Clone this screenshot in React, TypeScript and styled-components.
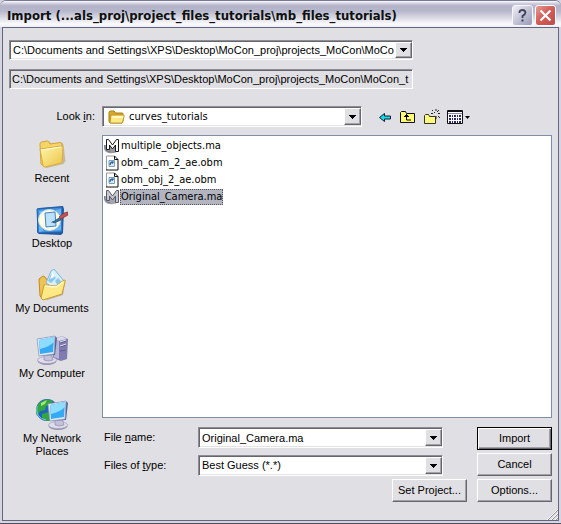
import React from "react";
import styled, { createGlobalStyle, css } from "styled-components";

const GlobalStyle = createGlobalStyle`
  * { box-sizing: border-box; }
  html, body { margin: 0; padding: 0; }
  body { background: #e0dfe3; color: #000; font: 11px/15px "Liberation Sans", Arial, sans-serif; }
  button, input, select { font: inherit; color: inherit; }
`;

const sunken = css`
  border: 1px solid;
  border-color: #8d8d95 #fff #fff #8d8d95;
  box-shadow: inset 1px 1px 0 #66666c, inset -1px -1px 0 #e4e2e6;
`;
const raised = css`
  border: 1px solid;
  border-color: #fff #66666c #66666c #fff;
  box-shadow: inset -1px -1px 0 #a2a1a8;
`;

const Window = styled.div`
  display: flex;
  flex-direction: column;
  min-height: 100vh;
  padding: 0 2px 2px;
  background: #d5d4e0;
  border-bottom: 1px solid #50505e;
`;

const TitleBar = styled.header`
  display: flex;
  align-items: center;
  gap: 2px;
  height: 27px;
  margin: 0 -2px;
  padding: 3px 5px 0 7px;
  border-top: 1px solid #777995;
  border-radius: 6px 6px 0 0;
  background: linear-gradient(#fff 0, #d5d5e2 2px, #b2b2c9 5px, #b7b7cc 10px, #e0e0e9 18px, #fafafd 23px, #ececf2 26px);
`;

const Title = styled.h1`
  flex: 1;
  margin: 0;
  overflow: hidden;
  white-space: nowrap;
  font: bold 13px/18px "DejaVu Sans Condensed", "DejaVu Sans", sans-serif;
  color: #0e1010;
`;

const CaptionButton = styled.button<{ $danger?: boolean }>`
  width: 21px;
  height: 21px;
  padding: 0;
  border: 1px solid ${(p) => (p.$danger ? "#fff" : "#f5f5fb")};
  border-radius: 3px;
  background: ${(p) =>
    p.$danger
      ? "linear-gradient(135deg, #e59d96, #d45e58 45%, #c04a48)"
      : "linear-gradient(135deg, #f0f0f7, #c3c3d6 50%, #9899b4)"};
  svg { display: block; margin: 0 auto; }
`;

const Body = styled.main`
  flex: 1;
  display: flex;
  flex-direction: column;
  padding: 12px 6px 18px;
  background: #e0dfe3;
  border: 1px solid #626680;
`;

const Paths = styled.div`
  display: flex;
  flex-direction: column;
  gap: 9px;
  margin-right: 139px;
`;

const Combo = styled.div<{ $height?: number }>`
  ${sunken}
  display: flex;
  align-items: center;
  flex: 1 1 auto;
  min-width: 0;
  height: ${(p) => p.$height ?? 21}px;
  padding: 1px 0 1px 2px;
  background: #fff;
`;

const fieldText = css`
  flex: 1;
  min-width: 0;
  width: 100%;
  height: 100%;
  padding: 0 1px;
  border: 0;
  outline: 0;
  background: transparent;
`;
const TextInput = styled.input`${fieldText}`;
const Select = styled.select<{ $list?: boolean }>`
  ${fieldText}
  appearance: none;
  ${(p) => p.$list && css`font-family: "DejaVu Sans Condensed", "DejaVu Sans", sans-serif;`}
`;

const ReadOnlyPath = styled.input`
  ${sunken}
  width: 100%;
  height: 20px;
  padding: 0 2px;
  outline: 0;
  background: #e0dfe3;
`;

const arrowFace = css`
  ${raised}
  display: flex;
  flex: none;
  align-items: center;
  justify-content: center;
  width: 17px;
  height: 100%;
  padding: 0;
  background: #e0dfe3;
`;
const ArrowButton = styled.button`${arrowFace}`;
const ArrowFace = styled.span`${arrowFace} pointer-events: none;`;

const Explorer = styled.div`
  flex: 1;
  display: grid;
  grid-template-columns: 86px 1fr;
  column-gap: 7px;
  margin-top: 17px;
`;

const Places = styled.nav`
  display: flex;
  flex-direction: column;
  padding-top: 33px;
`;
const Place = styled.a`
  display: flex;
  flex-direction: column;
  align-items: center;
  height: 65px;
  color: #000;
  text-align: center;
  text-decoration: none;
  line-height: 13px;
  svg { flex: none; margin-bottom: 1px; }
`;

const Browser = styled.section`
  display: flex;
  flex-direction: column;
  min-width: 0;
`;

const LookIn = styled.div`
  display: flex;
  align-items: center;
  margin-left: -93px;
`;
const LookLabel = styled.label`
  width: 93px;
  padding-right: 7px;
  text-align: right;
`;
const FolderSlot = styled.span`
  display: flex;
  margin: 0 3px;
`;
const Tools = styled.div`
  display: flex;
  align-items: center;
  width: 190px;
  padding-left: 15px;
  gap: 6px;
`;
const ToolButton = styled.button`
  display: flex;
  padding: 0;
  border: 0;
  background: none;
`;

const FileList = styled.ul`
  flex: 1;
  min-height: 120px;
  margin: 8px 0 9px;
  padding: 1px;
  border: 1px solid #7f8ea8;
  background: #fff;
  list-style: none;
  font: 11px/17px "DejaVu Sans Condensed", "DejaVu Sans", sans-serif;
`;
const FileRow = styled.li`
  display: flex;
  align-items: center;
  height: 17px;
`;
const FileName = styled.span<{ $selected?: boolean }>`
  height: 16px;
  line-height: 14px;
  border: 1px ${(p) => (p.$selected ? "dotted #55555f" : "solid transparent")};
  background: ${(p) => (p.$selected ? "#b2b4bf" : "transparent")};
`;

const Footer = styled.div`
  display: flex;
  gap: 34px;
`;
const Fields = styled.div`
  display: flex;
  flex: 1;
  flex-direction: column;
  gap: 7px;
  min-width: 0;
`;
const Field = styled.div`
  display: flex;
  align-items: center;
`;
const FieldLabel = styled.label`
  flex: none;
  width: 96px;
  padding-left: 2px;
`;
const Actions = styled.div`
  display: flex;
  flex: none;
  flex-direction: column;
  gap: 3px;
`;
const ActionRow = styled.div`
  display: flex;
  justify-content: flex-end;
  gap: 10px;
  margin-top: 3px;
`;
const PushButton = styled.button<{ $primary?: boolean }>`
  ${raised}
  width: 75px;
  height: 23px;
  padding: 0;
  background: #e0dfe3;
  ${(p) =>
    p.$primary &&
    css`
      border-color: #000;
      box-shadow: inset 1px 1px 0 #fff, inset -1px -1px 0 #66666c, inset -2px -2px 0 #a2a1a8;
    `}
`;

const Grip = styled.svg`
  align-self: flex-end;
  margin: 6px -6px -18px 0;
`;

const Arrow = () => (
  <svg width="7" height="4" viewBox="0 0 7 4" aria-hidden="true" shapeRendering="crispEdges">
    <path d="M0 0h7L3.500 4z" />
  </svg>
);

const SmallFolder = () => (
  <svg width="17" height="14" viewBox="0 0 17 14" aria-hidden="true">
    <path d="M1 3Q1 1 2.500 1H6l1.500 2H14q1 0 1 1v7l-1 2H2.500Q1 13 1 11z" fill="#d9a827" stroke="#ad7d17" />
    <path d="M3 5h12.500q1 0 .7 1L14.500 12q-.3 1-1 1H2z" fill="#ffe980" stroke="#b98b20" strokeWidth=".8" />
    <path d="M4 6h11l-.5 2H3.500z" fill="#fffac8" />
  </svg>
);

const MayaIcon = ({ dim }: { dim?: boolean }) => (
  <svg width="16" height="16" viewBox="0 0 16 16" aria-hidden="true">
    <path d="M0 7q-1 7 5 8 6 1 9-2V8z" fill={dim ? "#a5a6b0" : "#97989b"} />
    <path d="M.5 7q0 6 6 7" fill="none" stroke="#777981" />
    <path
      d="M2.500 11.500v-10h2l4 5.500 4-5.500h2v12h-3V7L8.500 11 5.500 7v4.500z"
      fill={dim ? "#c5c6cf" : "#fff"}
      stroke={dim ? "#595b66" : "#161718"}
    />
  </svg>
);

const DocIcon = () => (
  <svg width="16" height="16" viewBox="0 0 16 16" aria-hidden="true">
    <path d="M2.500 1h8L14 4.500V15H2.500z" fill="#fff" />
    <path d="M2.500 15V1h8" fill="none" stroke="#999" />
    <path d="M10.500 1v3.500H14V15H2" fill="none" stroke="#111" />
    <path d="M10.500 1L14 4.500" stroke="#111" />
    <path d="M5 5.500h5.500v6H5z" fill="#d6e9f4" stroke="#7ba0b8" />
    <path d="M6 10q0-3 3-3M8 8.500l1.500-2" fill="none" stroke="#246599" strokeWidth="1.300" />
  </svg>
);

const RecentIcon = () => (
  <svg width="32" height="32" viewBox="0 0 32 32" aria-hidden="true">
    <defs>
      <linearGradient id="fold" x1="0" y1="0" x2="1" y2="1">
        <stop stopColor="#fff7a9" /><stop offset="1" stopColor="#edc24a" />
      </linearGradient>
    </defs>
    <path d="M6 5q0-1 1-1l6-1q1 0 1.500 1l1 2 10-2q2 0 2 2l2 16-2 3-17 4-3-3z" fill="#9f8337" opacity=".4" />
    <path d="M4 5q0-1.500 1.500-2l6-1q1 0 1.500 1l1 2 10-1.500q2 0 2 2V21L9 28 5 25z" fill="#f4d565" stroke="#cfa33a" />
    <path d="M4 10l21-3q2 0 2 1.500l-1 14q0 1-1 1.500L9 28q-2 0-2-2z" fill="url(#fold)" stroke="#dcae3b" />
    <path d="M5 11l20-3" stroke="#fffce0" />
  </svg>
);

const DesktopIcon = () => (
  <svg width="32" height="32" viewBox="0 0 32 32" aria-hidden="true">
    <path d="M1 6q0-2 2-2l24-2 1 3-1 24-2 2-22-1-2-2z" fill="#23579c" />
    <path d="M1 5l25-2v25l-24 1z" fill="#3f8ddb" stroke="#1e65b4" />
    <path d="M3 7l7-1-6 8zM19 6l6-1v7zM3 21l5 6-5 1zM25 19v7l-7 1z" fill="#69b6f2" />
    <ellipse cx="13.500" cy="16" rx="11" ry="10.500" fill="#fffce6" stroke="#cfdfda" />
    <path d="M9 9l10-1 1 14-10 1z" fill="#bce2fb" stroke="#4284c0" />
    <path d="M17 18l6-4 2 2-7 3z" fill="#3673ad" stroke="#24476f" strokeWidth=".7" />
    <path d="M23 13l5-4 4-1v3l-7 4z" fill="#c25450" stroke="#832b35" strokeWidth=".7" />
    <path d="M15 19l2-2 1 1z" fill="#173b65" />
  </svg>
);

const DocumentsIcon = () => (
  <svg width="32" height="32" viewBox="0 0 32 32" aria-hidden="true">
    <path d="M4 11l4-3 4 4 12-3 5 4-2 13-16 5-7-3z" fill="#806b36" opacity=".4" />
    <path d="M3 10l4-3q2 0 3 3l17 2-2 12-17 6-4-3z" fill="#f0c452" stroke="#bd8b25" />
    <path d="M15 2l3-2 10 12-7 9-11-7z" fill="#d5effc" stroke="#80b5dc" />
    <path d="M15 5l-3 7 3 2 5-5zM19 12l3-3 3 3-3 5z" fill="#8ac7eb" />
    <path d="M17 2l-3 8 4-2z" fill="#fff" />
    <path d="M5 29l3-13 12 1 8-6q2 0 1 2l-3 12L7 31z" fill="#ffe985" stroke="#cd9b2c" />
    <path d="M9 17l11 1 7-5" fill="none" stroke="#fffbd0" strokeWidth="1.500" />
  </svg>
);

const Monitor = ({ x = 0, y = 0 }: { x?: number; y?: number }) => (
  <g transform={`translate(${x} ${y})`}>
    <ellipse cx="10" cy="25" rx="9.500" ry="4" fill="#9391af" />
    <ellipse cx="10" cy="24" rx="9.500" ry="3.500" fill="#dfdeed" stroke="#a3a0bd" strokeWidth=".7" />
    <path d="M7 17h7l2 7q-5 2-9 0z" fill="#c4c2da" stroke="#8d8bac" strokeWidth=".7" />
    <path d="M0 3l18-3 2 2-2 17-16 1z" fill="#54648f" />
    <path d="M0 3L18 0l-1 18-15 2z" fill="#e1e9f7" stroke="#93a0c6" strokeWidth=".7" />
    <path d="M2 4l15-3-1 15-13 2z" fill="#33aaf2" />
    <path d="M2 4l15-3v5q-5 5-14 7z" fill="#8edcff" />
  </g>
);

const ComputerIcon = () => (
  <svg width="32" height="32" viewBox="0 0 32 32" aria-hidden="true">
    <path d="M18 5l8-3 6 3-1 20-6 2-8-3z" fill="#7f7cb0" />
    <path d="M18 5l8-3 5 3-8 2z" fill="#d9d7ea" />
    <path d="M18 5l5 2v18l-5-2z" fill="#b7b5d6" />
    <path d="M24 9l6-2M24 13l6-2M24 17l6-1" stroke="#5f5c92" />
    <path d="M24 8l6-2M24 12l6-2" stroke="#ded9f0" />
    <Monitor x={1} y={2} />
  </svg>
);

const NetworkIcon = () => (
  <svg width="32" height="32" viewBox="0 0 32 32" aria-hidden="true">
    <circle cx="11" cy="11" r="11" fill="#2164bd" />
    <path d="M3 4q8-6 14-2l-3 4-4 1-1 4-5 1-3 5q-3-7 2-13zM6 15l7-2 6 5-5 4q-6 0-8-3z" fill="#33a641" />
    <path d="M5 4l6-3-2 4-4 2z" fill="#a5e875" />
    <path d="M1 7q-2 12 9 14" stroke="#74c8ef" fill="none" />
    <Monitor x={12} y={2} />
  </svg>
);

const files = [
  { name: "multiple_objects.ma", maya: true },
  { name: "obm_cam_2_ae.obm" },
  { name: "obm_obj_2_ae.obm" },
  { name: "Original_Camera.ma", maya: true, selected: true },
];

const places = [
  { name: "Recent", Icon: RecentIcon },
  { name: "Desktop", Icon: DesktopIcon },
  { name: "My Documents", Icon: DocumentsIcon },
  { name: "My Computer", Icon: ComputerIcon },
  { name: "My Network Places", Icon: NetworkIcon },
];

export default function App() {
  return (
    <>
      <GlobalStyle />
      <Window role="dialog" aria-labelledby="title">
        <TitleBar>
          <Title id="title">Import (...als_proj\project_files_tutorials\mb_files_tutorials)</Title>
          <CaptionButton aria-label="Help">
            <svg width="13" height="15" viewBox="0 0 13 15" fill="none">
              <path d="M3.500 5V4q.5-2 3-2t3 2.500q0 1.500-3 3.500v2" stroke="#3f4059" strokeWidth="1.800" />
              <path d="M5.500 11.500h2v2h-2z" fill="#3f4059" />
            </svg>
          </CaptionButton>
          <CaptionButton $danger aria-label="Close">
            <svg width="15" height="15" viewBox="0 0 15 15">
              <path d="M2.500 2.500l10 10M12.500 2.500l-10 10" stroke="#fff" strokeWidth="2.200" />
            </svg>
          </CaptionButton>
        </TitleBar>
        <Body>
          <Paths>
            <Combo $height={20}>
              <TextInput aria-label="Path" defaultValue="C:\Documents and Settings\XPS\Desktop\MoCon_proj\projects_MoCon\MoCon_tutorials" />
              <ArrowButton aria-label="Show paths"><Arrow /></ArrowButton>
            </Combo>
            <ReadOnlyPath aria-label="Current path" readOnly value="C:\Documents and Settings\XPS\Desktop\MoCon_proj\projects_MoCon\MoCon_t" />
          </Paths>
          <Explorer>
            <Places aria-label="Places">
              {places.map(({ name, Icon }) => (
                <Place href="#" key={name}><Icon />{name}</Place>
              ))}
            </Places>
            <Browser>
              <LookIn>
                <LookLabel htmlFor="look">Look <u>i</u>n:</LookLabel>
                <Combo>
                  <FolderSlot><SmallFolder /></FolderSlot>
                  <Select id="look" $list><option>curves_tutorials</option></Select>
                  <ArrowFace><Arrow /></ArrowFace>
                </Combo>
                <Tools>
                  <ToolButton aria-label="Back">
                    <svg width="16" height="16" viewBox="0 0 16 16">
                      <path d="M2.500 8.500l5-4V7h6v3h-6v2.500z" fill="#16dbe4" stroke="#0b2038" />
                    </svg>
                  </ToolButton>
                  <ToolButton aria-label="Up one level">
                    <svg width="18" height="16" viewBox="0 0 18 16">
                      <path d="M1.500 13.500v-10l1-1h4l1 2h8v9z" fill="#fffb79" stroke="#111" />
                      <path d="M5 7.500h5M6 6.500h3M7 5.500h1M7.500 6v5H12" fill="none" stroke="#000" />
                    </svg>
                  </ToolButton>
                  <ToolButton aria-label="New folder">
                    <svg width="18" height="16" viewBox="0 0 18 16">
                      <path d="M1.500 14.500v-8l1-1h3l1 2h6v7z" fill="#fffb79" stroke="#333" />
                      <path d="M13 0v2M13 7v3M8 4.500h2M15 4.500h2M9 1l1 1M11 3l1 1M16 1l-2 2M15 7l2 2" stroke="#222" />
                    </svg>
                  </ToolButton>
                  <ToolButton aria-label="View menu">
                    <svg width="24" height="16" viewBox="0 0 24 16">
                      <path d="M.5 1.500h15v13H.5z" fill="#fff" stroke="#111" />
                      <path d="M1 2.500h14" stroke="#111" />
                      <path d="M1 4.500h14" stroke="#8c8ca8" />
                      <path d="M2 7h12M2 10h12M2 13h12" stroke="#29296b" strokeWidth="2" strokeDasharray="2 1 1 1" />
                      <path d="M18 7h5l-2.500 3z" />
                    </svg>
                  </ToolButton>
                </Tools>
              </LookIn>
              <FileList aria-label="Files">
                {files.map((f) => (
                  <FileRow key={f.name}>
                    {f.maya ? <MayaIcon dim={f.selected} /> : <DocIcon />}
                    <FileName $selected={f.selected}>{f.name}</FileName>
                  </FileRow>
                ))}
              </FileList>
              <Footer>
                <Fields>
                  <Field>
                    <FieldLabel htmlFor="file">File <u>n</u>ame:</FieldLabel>
                    <Combo>
                      <TextInput id="file" defaultValue="Original_Camera.ma" />
                      <ArrowButton aria-label="Show file names"><Arrow /></ArrowButton>
                    </Combo>
                  </Field>
                  <Field>
                    <FieldLabel htmlFor="type">Files of <u>t</u>ype:</FieldLabel>
                    <Combo>
                      <Select id="type"><option>Best Guess (*.*)</option></Select>
                      <ArrowFace><Arrow /></ArrowFace>
                    </Combo>
                  </Field>
                </Fields>
                <Actions>
                  <PushButton $primary>Import</PushButton>
                  <PushButton>Cancel</PushButton>
                </Actions>
              </Footer>
              <ActionRow>
                <PushButton>Set Project...</PushButton>
                <PushButton>Options...</PushButton>
              </ActionRow>
            </Browser>
          </Explorer>
          <Grip width="12" height="12" viewBox="0 0 12 12" aria-hidden="true">
            <path d="M1 12L12 1M5 12l7-7M9 12l3-3" stroke="#fff" />
            <path d="M2 12L12 2M6 12l6-6M10 12l2-2" stroke="#9695a4" />
          </Grip>
        </Body>
      </Window>
    </>
  );
}
